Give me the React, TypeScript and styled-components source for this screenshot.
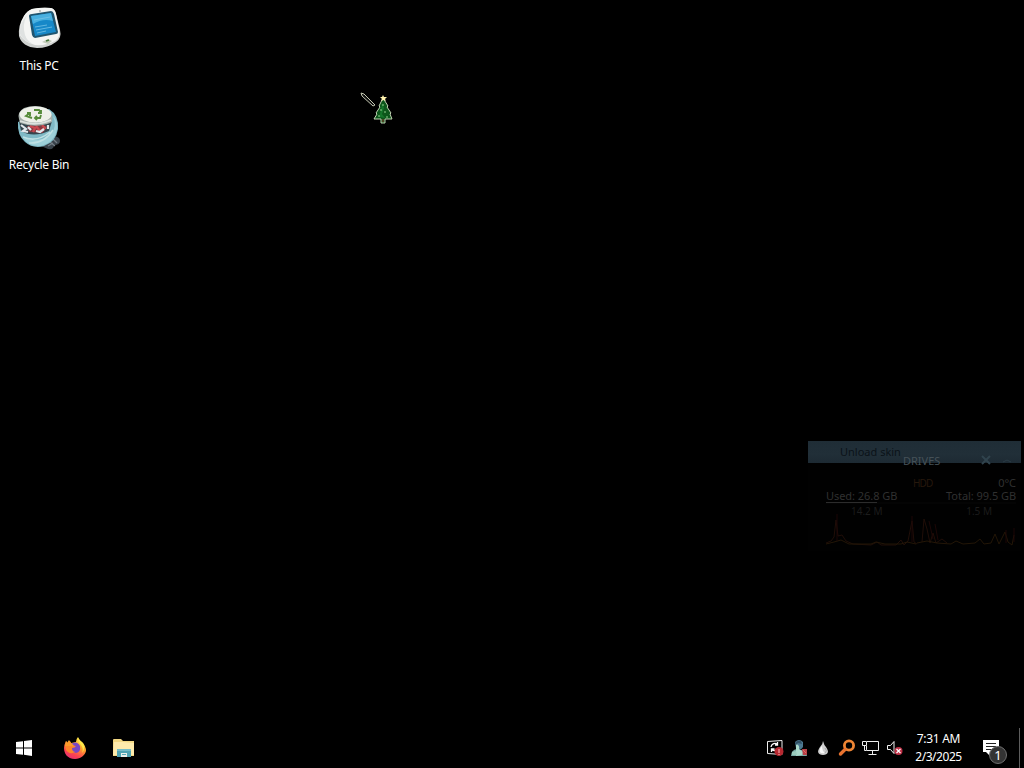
import React from "react";
import styled, { createGlobalStyle } from "styled-components";

const App = () => {
  return (
    <>
      <GlobalStyle />
      <Screen>
        <Desktop>
          <Shortcut>
            <ComputerIcon />
            <ShortcutLabel $spacing={-0.28}>This PC</ShortcutLabel>
          </Shortcut>
          <Shortcut>
            <RecycleIcon />
            <ShortcutLabel $spacing={-0.24}>Recycle Bin</ShortcutLabel>
          </Shortcut>
        </Desktop>

        <DrivesWidget />

        <Taskbar>
          <TaskButtons>
            <StartIcon />
            <FirefoxIcon />
            <ExplorerIcon />
          </TaskButtons>
          <Tray>
            <TrayIcons>
              <SyncIcon />
              <PersonIcon />
              <DropIcon />
              <SearchIcon />
              <NetworkIcon />
              <VolumeIcon />
            </TrayIcons>
            <Clock>
              <ClockLine $spacing={-0.3}>7:31 AM</ClockLine>
              <ClockLine $spacing={-0.46}>2/3/2025</ClockLine>
            </Clock>
            <Notifications>
              <MessageIcon />
              <Badge>1</Badge>
            </Notifications>
            <ShowDesktop />
          </Tray>
        </Taskbar>

        <Cursor>
          <TreeCursor />
        </Cursor>
      </Screen>
    </>
  );
};

export default App;

const DrivesWidget = () => (
  <Widget>
    <MenuBar>
      <MenuText>Unload skin</MenuText>
      <WidgetTitle>DRIVES</WidgetTitle>
      <MenuGlyphs width="36" height="12" viewBox="0 0 36 12">
        <path d="M2 2l8 8M10 2l-8 8" stroke="#30434d" strokeWidth="2" />
        <path d="M23 8l4-2 4 2" stroke="#2a3b45" fill="none" />
      </MenuGlyphs>
    </MenuBar>
    <WidgetBody>
      <StatRow>
        <HddLabel>HDD</HddLabel>
        <Dim $color="#303030">0°C</Dim>
      </StatRow>
      <StatRow>
        <Dim $color="#303030">Used: 26.8 GB</Dim>
        <Dim $color="#303030">Total: 99.5 GB</Dim>
      </StatRow>
      <UsageTrack>
        <UsageFill />
      </UsageTrack>
      <RateRow>
        <Rate>14.2 M</Rate>
        <Rate>1.5 M</Rate>
      </RateRow>
      <Graph width="192" height="36" viewBox="0 0 192 36">
        <path
          d="M0 29l5-2 3-4 2-17 2 16 4-1 4 6 7 3 18 1 6-3 4 3 15 0 5-5 3 5 4-4 4-20 2 21 3 2M96 28l2-23 3 10 3 14 3-10 3 10 6-4 5 4"
          stroke="#200e08"
          fill="none"
        />
        <path
          d="M0 30l8-2 7-2 8 4h22l5-2 9 2 16 0 6-2 9 2M91 29l10-2 10 2 14 1 5-3 7 3 12-1 5-4 4 5 7-1 4-9 4 10 6-12 3 10 4 3 2-10"
          stroke="#231607"
          fill="none"
        />
        <path d="M11 0v27M86 2v26M103 7l4 18M109 10l3 16M180 16v13M188 14v14" stroke="#1c0706" fill="none" />
      </Graph>
    </WidgetBody>
  </Widget>
);

const ComputerIcon = () => (
  <svg width="48" height="48" viewBox="0 0 48 48">
    <path d="M17 6Q27 4 36 5Q40 6 41 11L45 27Q47 35 41 39Q33 45 22 45Q7 44 4 33Q3 22 9 13Q12 8 17 6Z" fill="#cfd2d0" />
    <path d="M17 6Q27 4 36 5Q40 6 41 11L44 27Q46 34 40 38Q31 43 20 42Q9 39 5 32Q4 22 9 13Q12 8 17 6Z" fill="#f4f5f3" />
    <path d="M12 12Q7 21 10 32Q12 38 18 41Q8 38 5 31Q4 21 12 12Z" fill="#dfe2e1" />
    <path d="M14 13Q14 11 17 11L36 8Q38 8 39 11L43 29Q43 31 41 31L20 35Q18 35 17 32Z" fill="#20556f" />
    <path d="M16 13L36 10L41 29L20 33Z" fill="#1688c8" />
    <path d="M16 13L36 10L38 18Q28 15 18 21Z" fill="#49b0df" />
    <path d="M19 17l16-3M20 24l12-2M21 27l16-3M22 30l9-2" stroke="#76c3e6" strokeWidth=".8" />
    <path d="M27 39l6-3 4 2-4 3Z" fill="#c3cbbb" />
    <path d="M31 38l3-1" stroke="#45793b" strokeWidth="1.5" />
    <circle cx="25" cy="8" r="1" fill="#aeb2b0" />
  </svg>
);

const RecycleIcon = () => (
  <svg width="48" height="48" viewBox="0 -1 48 48">
    <path d="M35 34q10-2 10 4 0 4-6 4 0 5-6 4l-7-3Z" fill="#384149" />
    <path d="M38 36l4 4M35 39l5 4M33 43l5-3" stroke="#737d85" strokeWidth="1.3" />
    <path d="M3 19Q2 32 10 39Q18 46 29 43Q41 39 43 26Q44 12 34 6Z" fill="#7fb9c5" />
    <path d="M38 13Q43 24 35 32Q24 40 8 35Q14 44 26 43Q40 39 42 26Q43 17 38 13Z" fill="#9dd0d9" />
    <path d="M8 34q14 6 27-5M14 40q15 1 24-13" stroke="#bfe1e4" strokeWidth="1.5" fill="none" />
    <path d="M4 18L6 28Q18 35 34 28L37 18Z" fill="#33464e" />
    <path d="M12 23l9-1 11 1-4 7-14-1Z" fill="#843a40" />
    <path d="M15 23l5 2-2 4M27 22l3 3-4 3M21 23l4 5" stroke="#c9484f" strokeWidth="2.3" fill="none" />
    <path d="M6 22l5 4-3 2 5 1M21 28l4 1 4-3M33 22l0 4M13 24l3 3" stroke="#e2e8ec" strokeWidth="2.2" fill="none" />
    <path d="M4 16Q2 9 9 5Q20 1 31 5Q39 11 37 19Q22 26 5 20Z" fill="#a5afaa" />
    <ellipse cx="20.5" cy="11.5" rx="16" ry="8" fill="#eef0e9" />
    <path d="M5 18q15 6 31-1" stroke="#dce2de" strokeWidth="1.8" fill="none" />
    <g stroke="#568b3b" strokeWidth="1.9" fill="none">
      <path d="M19 7h5l2 3M23 10h3V7" />
      <path d="M26 12l-1 3h-5M22 13l-2 2 2 2" />
      <path d="M17 15l-6-2 4-3M12 10h3v3" />
    </g>
  </svg>
);

const StartIcon = () => (
  <TaskSvg viewBox="0 0 24 24">
    <path d="M4 6l7-.8v6.3H4zM12 5.1L20 4v7.5h-8zM4 12.5h7v6.2L4 17.9zM12 12.5h8v7.4l-8-1.1z" fill="#fff" />
  </TaskSvg>
);

const FirefoxIcon = () => (
  <TaskSvg viewBox="-1 0 24 24">
    <defs>
      <linearGradient id="fox" x1="18" y1="2" x2="7" y2="23" gradientUnits="userSpaceOnUse">
        <stop stopColor="#fff04b" />
        <stop offset=".4" stopColor="#ff9e2c" />
        <stop offset=".75" stopColor="#fc4251" />
        <stop offset="1" stopColor="#e52f70" />
      </linearGradient>
    </defs>
    <path d="M15 1q1 3 4 5 4 4 4 9c-1 4-5 8-11 8C4 23 1 17 1 12q0-3 2-7l1 2 2-3 2 3 5-1Q13 3 15 1z" fill="url(#fox)" />
    <path d="M8 8Q14 4 17 10q1 6-4 7-6 0-6-5 0-2 4-3z" fill="#7946c4" />
    <path d="M2 10Q4 6 8 9l5 1q-1 2-4 2 0 4 4 4Q6 19 3 14z" fill="#ff8429" />
    <path d="M3 5l-1 5h9L8 7 7 5 5 7z" fill="#ff9b29" />
    <path d="M15 2q0 4 3 7 3 4 1 8 4-5 1-10-3-2-5-5z" fill="#ffe849" />
  </TaskSvg>
);

const ExplorerIcon = () => (
  <TaskSvg viewBox="0 0 24 24">
    <path d="M1 4q0-1 1-1h7l2 2h11v15H1z" fill="#f3d884" />
    <path d="M2 6h9l11 1v12H1z" fill="#ffebac" />
    <path d="M5 13h14v8h-4v-4H9v4H5z" fill="#4fa3b3" />
    <path d="M5 13h14v2H5z" fill="#76bdc8" />
    <path d="M9 17h6v4H9z" fill="#e9eee9" />
    <path d="M10 18h4v1h-4z" fill="#53a8b6" />
  </TaskSvg>
);

const SyncIcon = () => (
  <TraySvg viewBox="0 0 18 18">
    <path d="M1.5 2.5L16 1.5v14l-14.5-1z" fill="none" stroke="#eee" />
    <path d="M5 8a4 4 0 0 1 6-3M11.5 3v3H9M11 10a4 4 0 0 1-5 1M5.5 13v-3h3" fill="none" stroke="#fff" strokeWidth="1.3" />
    <circle cx="13" cy="12.5" r="4.5" fill="#b72931" />
    <path d="M13 10v4M13 15v1" stroke="#ffb8b8" />
  </TraySvg>
);

const PersonIcon = () => (
  <TraySvg viewBox="0 0 18 18">
    <path d="M1 17q0-6 6-7l5 1q4 1 5 6z" fill="#78aaa5" />
    <path d="M5 3q4-4 8 0v5q-2 4-7 1z" fill="#4c7890" />
    <path d="M6 5q4 1 3 5l4 3-1 3-6 1z" fill="#a9d8ca" />
    <path d="M5 4q2-3 6-2l1 3-4-1-2 2z" fill="#305065" />
    <path d="M2 13l4-1 1 4H2z" fill="#9bcbbd" />
    <path d="M12 10h5v6h-4z" fill="#b74248" />
    <path d="M13 11l3 3" stroke="#e06862" />
  </TraySvg>
);

const DropIcon = () => (
  <TraySvg viewBox="0 0 18 18">
    <path d="M9 2q1 4 3 6 5 7-3 8-8-1-3-8 3-3 3-6z" fill="#cfcfcf" />
    <path d="M8 7q-3 3-2 6 1 2 5 1-3-2-3-7z" fill="#fafafa" />
    <path d="M11 9q3 3 0 5" stroke="#aaa" fill="none" />
  </TraySvg>
);

const SearchIcon = () => (
  <TraySvg viewBox="0 0 18 18">
    <circle cx="11" cy="6.5" r="4.6" fill="none" stroke="#ee8534" strokeWidth="2.8" />
    <path d="M7 10.5l-4.5 4.5" stroke="#e9732f" strokeWidth="3.4" strokeLinecap="round" />
  </TraySvg>
);

const NetworkIcon = () => (
  <TraySvg viewBox="0 0 18 18">
    <path d="M5 2.5h11.5v9h-12V7M10.5 12v3M6.5 15.5h8" fill="none" stroke="#eee" />
    <path d="M.5 2.5h4v4h-4zM2.5 6.5v5h2" fill="#000" stroke="#eee" />
  </TraySvg>
);

const VolumeIcon = () => (
  <TraySvg viewBox="0 0 18 18">
    <path d="M1.5 6.5h3l3.5-4v12l-3.5-4h-3z" fill="none" stroke="#f2f2f2" />
    <circle cx="12.5" cy="12" r="4" fill="#bf3147" />
    <path d="M10.5 10l4 4M14.5 10l-4 4" stroke="#fff" strokeWidth="1.2" />
  </TraySvg>
);

const MessageIcon = () => (
  <svg width="18" height="18" viewBox="0 0 18 18">
    <path d="M1 1h16v12H8v4l-4-4H1z" fill="#fff" />
    <path d="M4 4.5h10M4 7.5h10M4 10.5h7" stroke="#222" />
  </svg>
);

const TreeCursor = () => (
  <svg width="34" height="34" viewBox="0 0 34 34">
    <path d="M1 1l3 1 11 11-2 1L2 4z" fill="#111" stroke="#c4c8b2" />
    <path d="M23 6l5 8-1 1 4 6-1 1 2 5h-7v4h-4v-4h-7l3-5-1-1 4-6-1-1z" fill="#0d561b" stroke="#bfd0b0" />
    <path d="M22 11l2 5-2 6 3 4-6-1 2-7z" fill="#15752a" />
    <path d="M20 18h2M22 13h2M18 24h2M26 25h2M24 20h2" stroke="#8fd18c" />
    <path d="M22 27h2v3h-2z" fill="#4c4322" />
    <path d="M23 3l1 2h3l-2 2 1 2-2-1-3 1 1-2-2-2h2z" fill="#fff3ae" />
  </svg>
);

const GlobalStyle = createGlobalStyle`
  * {
    box-sizing: border-box;
  }
  body {
    margin: 0;
    background: #000;
    overflow: hidden;
    font-family: "Noto Sans", "Open Sans", sans-serif;
  }
  svg {
    display: block;
    flex-shrink: 0;
  }
`;

const Screen = styled.main`
  position: relative;
  width: 1024px;
  height: 768px;
  display: flex;
  flex-direction: column;
  background: #000;
  color: #fff;
`;

const Desktop = styled.div`
  flex: 1;
  display: flex;
  flex-direction: column;
  align-items: flex-start;
  gap: 27px;
  padding: 3px 1px;
`;

const Shortcut = styled.div`
  width: 76px;
  height: 72px;
  display: flex;
  flex-direction: column;
  align-items: center;
  gap: 6px;
`;

const ShortcutLabel = styled.span<{ $spacing: number }>`
  font-size: 12px;
  line-height: 18px;
  letter-spacing: ${({ $spacing }) => $spacing}px;
  white-space: nowrap;
`;

const Widget = styled.section`
  position: absolute;
  left: 808px;
  top: 441px;
  width: 213px;
  height: 110px;
  background: #010101;
`;

const MenuBar = styled.div`
  height: 22px;
  display: flex;
  background: linear-gradient(#1f2d36, #212f38 60%, #1d2a33);
`;

const MenuText = styled.span`
  width: 63px;
  margin-left: 32px;
  font-size: 11px;
  line-height: 22px;
  white-space: nowrap;
  color: #0b1218;
`;

const WidgetTitle = styled.span`
  width: 47px;
  font-size: 11px;
  line-height: 39px;
  color: #455158;
`;

const MenuGlyphs = styled.svg`
  margin: 13px 0 0 30px;
`;

const WidgetBody = styled.div`
  padding: 13px 5px 0 18px;
`;

const StatRow = styled.div`
  height: 13px;
  display: flex;
  justify-content: space-between;
`;

const Dim = styled.span<{ $color: string }>`
  font-size: 11px;
  line-height: 14px;
  letter-spacing: -0.05px;
  color: ${({ $color }) => $color};
`;

const HddLabel = styled.span`
  padding-left: 87px;
  font-size: 10px;
  line-height: 14px;
  letter-spacing: -0.9px;
  color: #26180c;
`;

const UsageTrack = styled.div`
  height: 2px;
  background: #040404;
`;

const UsageFill = styled.div`
  width: 27%;
  height: 1px;
  background: #2c2c2c;
`;

const RateRow = styled.div`
  height: 13px;
  display: flex;
  justify-content: space-between;
  padding: 0 24px 0 25px;
`;

const Rate = styled.span`
  font-size: 10px;
  line-height: 15px;
  color: #1c1c1c;
`;

const Graph = styled.svg`
  margin-top: -3px;
`;

const Taskbar = styled.footer`
  height: 40px;
  display: flex;
  justify-content: space-between;
  background: #000;
`;

const TaskButtons = styled.div`
  display: flex;
  align-items: center;
  gap: 26px;
  padding-left: 12px;
`;

const TaskSvg = styled.svg`
  width: 24px;
  height: 24px;
`;

const Tray = styled.div`
  display: flex;
  align-items: center;
`;

const TrayIcons = styled.div`
  display: flex;
  gap: 6px;
`;

const TraySvg = styled.svg`
  width: 18px;
  height: 18px;
`;

const Clock = styled.div`
  width: 70px;
  display: flex;
  flex-direction: column;
  align-items: center;
  padding-right: 1px;
`;

const ClockLine = styled.span<{ $spacing: number }>`
  font-size: 12px;
  line-height: 18px;
  letter-spacing: ${({ $spacing }) => $spacing}px;
  white-space: nowrap;
`;

const Notifications = styled.div`
  position: relative;
  width: 45px;
  padding-left: 8px;
`;

const Badge = styled.span`
  position: absolute;
  left: 15px;
  top: 7px;
  width: 18px;
  height: 18px;
  border: 1px solid #6f6f6f;
  border-radius: 50%;
  background: #333;
  font-size: 13px;
  line-height: 16px;
  text-align: center;
`;

const ShowDesktop = styled.div`
  width: 5px;
  height: 40px;
  border-left: 1px solid #5d5d5d;
`;

const Cursor = styled.div`
  position: absolute;
  left: 360px;
  top: 92px;
`;
